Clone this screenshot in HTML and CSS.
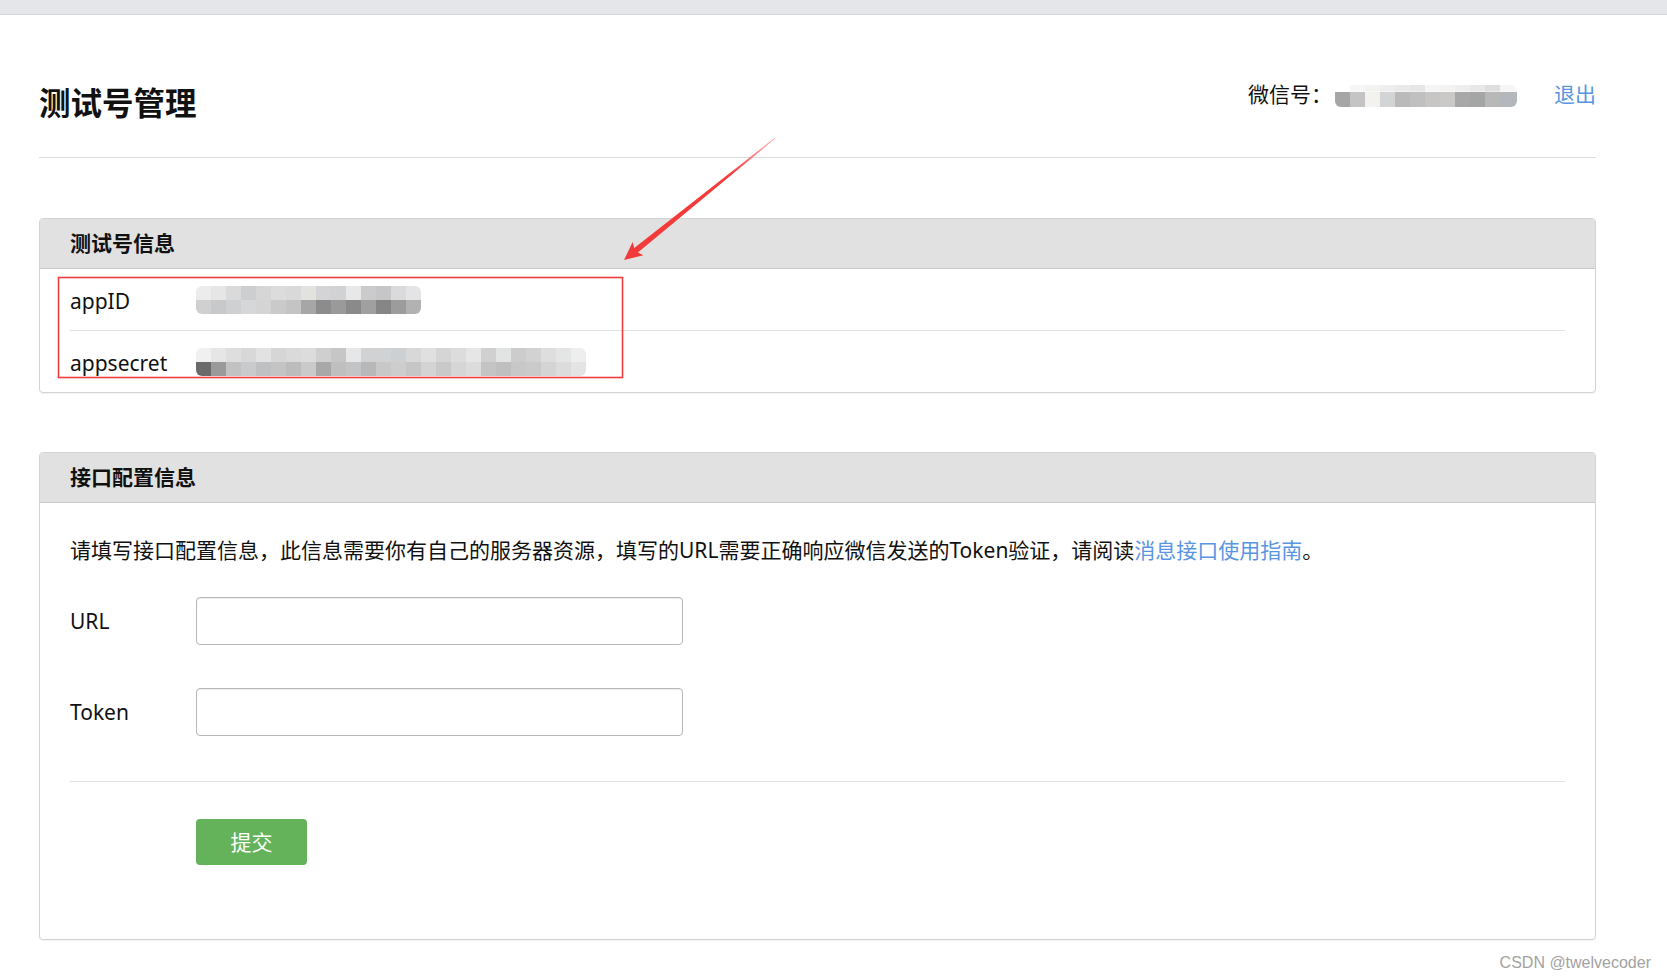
FILE: index.html
```html
<!DOCTYPE html>
<html lang="zh-CN">
<head>
<meta charset="utf-8">
<title>测试号管理</title>
<link rel="stylesheet" href="styles.css">
</head>
<body>
<div class="topbar"></div>
<div class="page">
  <header class="head">
    <h1 class="title">测试号管理</h1>
    <div class="account">
      <span class="account-label">微信号：</span>
      <span class="mosaic mosaic-wx"></span>
      <a class="link logout" href="#">退出</a>
    </div>
  </header>

  <section class="panel panel-info">
    <div class="panel-head">测试号信息</div>
    <div class="panel-body">
      <div class="info-row">
        <span class="info-label">appID</span>
        <span class="mosaic mosaic-id"></span>
      </div>
      <div class="info-row">
        <span class="info-label">appsecret</span>
        <span class="mosaic mosaic-secret"></span>
      </div>
    </div>
  </section>

  <section class="panel panel-config">
    <div class="panel-head">接口配置信息</div>
    <div class="panel-body config-body">
      <p class="desc">请填写接口配置信息，此信息需要你有自己的服务器资源，填写的URL需要正确响应微信发送的Token验证，请阅读<a class="link" href="#">消息接口使用指南</a>。</p>
      <div class="form-row">
        <label class="form-label">URL</label>
        <input class="form-input" type="text">
      </div>
      <div class="form-row form-row-token">
        <label class="form-label">Token</label>
        <input class="form-input" type="text">
      </div>
      <div class="form-actions">
        <button class="btn-submit" type="button">提交</button>
      </div>
    </div>
  </section>
</div>
<div class="watermark">CSDN @twelvecoder</div>

<svg class="annot" width="800" height="400" viewBox="0 0 800 400">
  <defs>
    <linearGradient id="arrowFade" x1="0" y1="0" x2="194" y2="0" gradientUnits="userSpaceOnUse">
      <stop offset="0" stop-color="#f23a3a"/>
      <stop offset="0.7" stop-color="#f43c3c"/>
      <stop offset="1" stop-color="#ffb4b4"/>
    </linearGradient>
  </defs>
  <rect x="58.5" y="277.5" width="564" height="100" fill="none" stroke="#f33c3c" stroke-width="1.6"/>
  <g transform="translate(624 260) rotate(-38.9)">
    <polygon points="0,0 18,-8.5 15.5,-2.9 194,-0.5 194,0.5 15.5,2.9 18,8.5" fill="url(#arrowFade)"/>
  </g>
</svg>
</body>
</html>
```

FILE: styles.css
```css
html, body {
  margin: 0;
  padding: 0;
}

body {
  position: relative;
  background: #ffffff;
  color: #222222;
  font-family: "Noto Sans", "Noto Sans CJK SC", sans-serif;
  font-size: 21px;
}

.topbar {
  height: 14px;
  background: #e5e6ea;
  border-bottom: 1px solid #d6d7da;
}

.page {
  margin-left: 39px;
  width: 1557px;
}

.head {
  box-sizing: border-box;
  height: 143px;
  padding-top: 64px;
  border-bottom: 1px solid #dcdcdc;
  display: flex;
  justify-content: space-between;
  align-items: flex-start;
}

.title {
  margin: 4px 0 0 0;
  font-size: 31.5px;
  line-height: 40px;
  font-weight: 700;
  color: #111111;
}

.account {
  display: flex;
  align-items: flex-start;
  line-height: 30px;
}

.account-label {
  width: 84px;
  color: #111111;
}

.link {
  color: #5a95e2;
  text-decoration: none;
}

.logout {
  margin-left: 37px;
}

.mosaic {
  display: block;
  border-radius: 6px;
  filter: blur(0.4px);
}

.mosaic-wx {
  margin-top: 6px;
  margin-left: 3px;
  width: 182px;
  height: 22px;
  background:
    linear-gradient(90deg, #ffffff 0 15px, #f6f6f6 15px 30px, #f2f2ee 30px 45px, #eeeeee 45px 60px, #eaeaea 60px 75px, #e6e6e6 75px 90px, #f4f5f4 90px 105px, #f2f3f2 105px 120px, #eeeeee 120px 135px, #e8e8e8 135px 150px, #dedede 150px 165px, #f6f6f6 165px 182px) top / 100% 30% no-repeat,
    linear-gradient(90deg, #a6a6a6 0 15px, #c4c4c4 15px 30px, #f4f2ee 30px 45px, #d2d4d6 45px 60px, #bababa 60px 75px, #c0c0c0 75px 90px, #c8c6c4 90px 105px, #cbc9c7 105px 120px, #a8a8a8 120px 135px, #a4a6a6 135px 150px, #b8b8b8 150px 165px, #b4b8bc 165px 182px) bottom / 100% 70% no-repeat;
}

.panel {
  border: 1px solid #d3d3d3;
  border-radius: 4px;
  box-shadow: 0 1px 1px rgba(0, 0, 0, 0.05);
  background: #ffffff;
  overflow: hidden;
}

.panel-info {
  margin-top: 60px;
}

.panel-config {
  margin-top: 59px;
}

.panel-head {
  height: 49px;
  line-height: 49px;
  padding-left: 30px;
  background: #e1e1e1;
  border-bottom: 1px solid #c9c9c9;
  font-weight: 700;
  color: #111111;
}

.panel-body {
  padding: 0 30px;
}

.info-row {
  display: flex;
  align-items: center;
  height: 61px;
}

.info-row + .info-row {
  border-top: 1px solid #e3e3e3;
}

.info-label {
  flex: 0 0 126px;
  padding-top: 4px;
  line-height: 57px;
  color: #111111;
}

.mosaic-id {
  width: 225px;
  height: 28px;
  background:
    linear-gradient(90deg, #ececec 0 15px, #e6e6e6 15px 30px, #dadada 30px 45px, #ccced0 45px 60px, #d6d6d6 60px 75px, #dcdcdc 75px 90px, #d9d9da 90px 105px, #e2e2de 105px 120px, #d4d4d6 120px 135px, #d1d2d4 135px 150px, #e8e8e8 150px 165px, #cbcbcb 165px 180px, #c6c6c8 180px 195px, #dadada 195px 210px, #e4e4e6 210px 225px) top / 100% 50% no-repeat,
    linear-gradient(90deg, #d0d0d0 0 15px, #c8c9ca 15px 30px, #cfd0d2 30px 45px, #d6d7d8 45px 60px, #d4d4d4 60px 75px, #cacaca 75px 90px, #c4c4c4 90px 105px, #a6a6a6 105px 120px, #8c8c8c 120px 135px, #9a9a9a 135px 150px, #8a8a8a 150px 165px, #a0a0a0 165px 180px, #868686 180px 195px, #9c9c9c 195px 210px, #b2b2b2 210px 225px) bottom / 100% 50% no-repeat;
}

.mosaic-secret {
  width: 390px;
  height: 28px;
  background:
    linear-gradient(90deg, #f0f0f0 0 15px, #e6e6e6 15px 30px, #dedede 30px 45px, #d8d8d8 45px 60px, #e2e2e2 60px 75px, #d6d6d6 75px 90px, #dadada 90px 105px, #dcdcdc 105px 120px, #cfcfcf 120px 135px, #c6c6c6 135px 150px, #e6e7e8 150px 165px, #d2d2d2 165px 180px, #d0d2d4 180px 195px, #cdd0d2 195px 210px, #d8d8d8 210px 225px, #e0e0e0 225px 240px, #d5d5d5 240px 255px, #dcdcdc 255px 270px, #e6e6e6 270px 285px, #d0d0d0 285px 300px, #e2e4e4 300px 315px, #cccccc 315px 330px, #d2d2d2 330px 345px, #dedede 345px 360px, #e4e6e6 360px 375px, #eeeeee 375px 390px) top / 100% 50% no-repeat,
    linear-gradient(90deg, #6a6a6a 0 15px, #9a9a9a 15px 30px, #c2c2c2 30px 45px, #c8cacc 45px 60px, #bfc0c2 60px 75px, #c4c4c4 75px 90px, #bcbcbc 90px 105px, #cacaca 105px 120px, #a8a8a8 120px 135px, #bfbfbf 135px 150px, #c2c4c6 150px 165px, #b8b8b8 165px 180px, #c8c8c8 180px 195px, #cdcdcd 195px 210px, #c6c6c6 210px 225px, #d4d4d4 225px 240px, #c9c9c9 240px 255px, #d6d6d6 255px 270px, #dcdcdc 270px 285px, #c4c4c4 285px 300px, #bfbfbf 300px 315px, #c8c8c8 315px 330px, #cacaca 330px 345px, #d4d4d4 345px 360px, #dcdcdc 360px 375px, #e4e4e4 375px 390px) bottom / 100% 50% no-repeat;
}

.config-body {
  padding-top: 32px;
  padding-bottom: 74px;
}

.desc {
  margin: 0;
  line-height: 30px;
  color: #111111;
}

.form-row {
  display: flex;
  align-items: center;
  margin-top: 32px;
}

.form-row-token {
  margin-top: 43px;
}

.form-label {
  flex: 0 0 126px;
  line-height: 48px;
  color: #111111;
}

.form-input {
  box-sizing: border-box;
  width: 487px;
  height: 48px;
  margin: 0;
  padding: 6px 12px;
  border: 1px solid #b8b8b8;
  border-radius: 4px;
  box-shadow: inset 0 1px 1px rgba(0, 0, 0, 0.075);
  font: inherit;
  background: #ffffff;
}

.form-actions {
  margin-top: 45px;
  padding-top: 37px;
  border-top: 1px solid #e3e3e3;
}

.btn-submit {
  display: block;
  margin: 0 0 0 126px;
  width: 111px;
  height: 46px;
  padding: 0;
  border: none;
  border-radius: 4px;
  background: #64b35b;
  color: #ffffff;
  font: inherit;
  line-height: 46px;
}

.watermark {
  margin-top: 10px;
  padding-right: 16px;
  text-align: right;
  font-family: "Liberation Sans", Arial, sans-serif;
  font-size: 16px;
  line-height: 26px;
  color: #a2a2a2;
}

.annot {
  position: absolute;
  left: 0;
  top: 0;
  pointer-events: none;
}
```
